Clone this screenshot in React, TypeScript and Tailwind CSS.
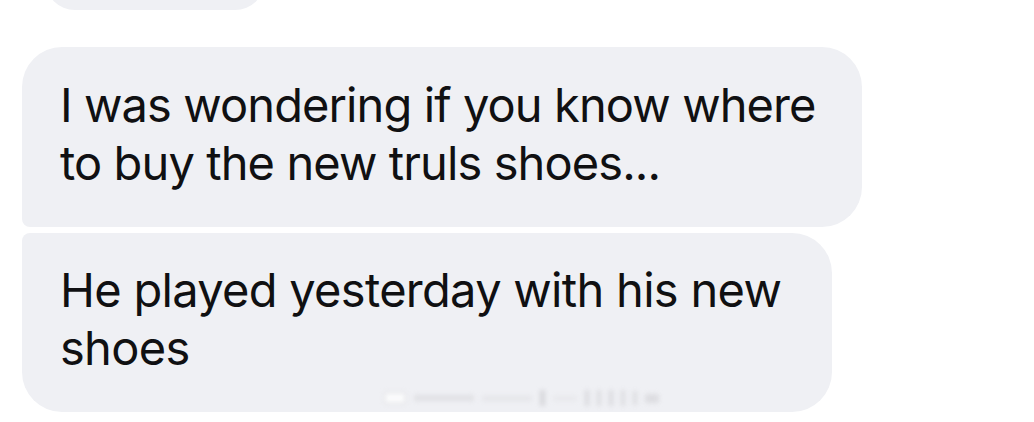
import React from "react";

export default function App() {
  const font = { fontFamily: "Inter, 'Noto Sans', sans-serif" };
  return (
    <div className="w-[1034px] h-[422px] overflow-hidden bg-white" style={font}>
      <div className="flex flex-col items-start">
        <div className="ml-[45px] -mt-[50px] h-[60px] w-[220px] rounded-[40px] bg-[#eff0f4]" />
        <div className="ml-[22px] mt-[37px] w-[840px] h-[180px] rounded-[40px] rounded-bl-[8px] bg-[#eff0f4] pl-[38px] pt-[29px] text-[47px] leading-[58px] text-[#101012] tracking-[-0.9px]">
          I was wondering if you know where
          <br />
          to buy the new truls shoes...
        </div>
        <div className="relative ml-[22px] mt-[6px] w-[810px] h-[179px] rounded-[40px] rounded-tl-[8px] bg-[#eff0f4] pl-[38px] pt-[28px] text-[47px] leading-[58px] text-[#101012] tracking-[-0.7px]">
          He played yesterday with his new
          <br />
          shoes
          <div className="absolute left-[362px] top-[153px] w-[280px] h-[24px] blur-[2.5px] flex items-center gap-[8px] opacity-80">
            <div className="w-[22px] h-[12px] bg-white border border-[#cfcfd3]" />
            <div className="w-[60px] h-[6px] bg-[#dcdce0]" />
            <div className="w-[50px] h-[5px] bg-[#e2e2e6]" />
            <div className="w-[5px] h-[16px] bg-[#cfcfd3]" />
            <div className="w-[24px] h-[5px] bg-[#e6e6ea]" />
            <div className="w-[4px] h-[16px] bg-[#d2d2d6]" />
            <div className="w-[4px] h-[16px] bg-[#d6d6da]" />
            <div className="w-[4px] h-[16px] bg-[#d2d2d6]" />
            <div className="w-[4px] h-[16px] bg-[#d6d6da]" />
            <div className="w-[4px] h-[14px] bg-[#d6d6da]" />
            <div className="w-[14px] h-[9px] bg-[#d8d8dc]" />
          </div>
        </div>
      </div>
    </div>
  );
}
